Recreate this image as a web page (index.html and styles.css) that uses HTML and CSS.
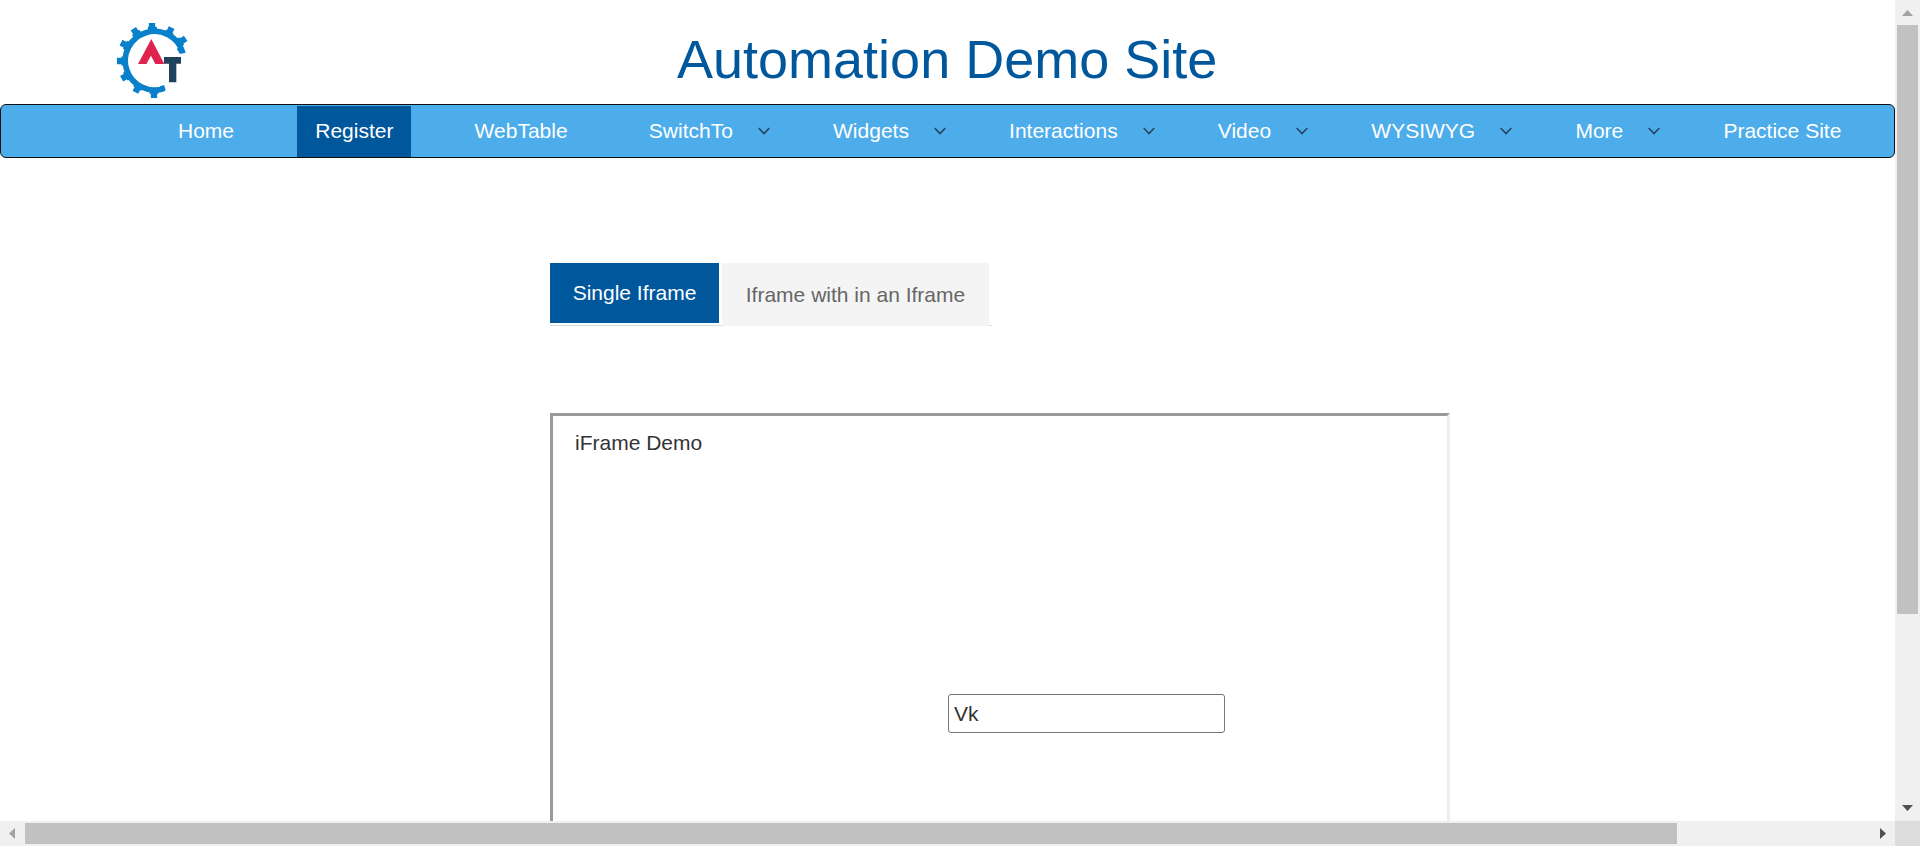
FILE: index.html
```html
<!DOCTYPE html>
<html lang="en">
<head>
<meta charset="utf-8">
<title>Frames</title>
<link rel="stylesheet" href="styles.css">
</head>
<body>
<div class="window">
  <div class="page">
    <header class="header">
      <svg class="logo" viewBox="0 0 330 285" aria-hidden="true">
        <g fill="none" stroke="#0880ca">
          <path stroke-width="17" d="M248 127A88 88 0 1 0 193 235"/>
          <path stroke-width="19" d="M156 39V66M100 56L116 80M63 98L88 111M51 153H80M65 206L90 192M106 247L120 221M162 264V238M215 53L203 77M257 85L233 101"/>
          <path stroke-width="27" d="M157 50V66M107 67L116 80M75 104L88 111M64 153H80M76 200L90 192M112 236L120 221M162 251V238M209 65L203 77M245 93L233 101"/>
        </g>
        <path d="M247 108L257 128L240 132L230 116Z" fill="#0880ca"/>
        <path d="M180 229L192 225L197 240L180 245Z" fill="#0880ca"/>
        <path d="M154 87L193 162H166L153 137L139 162H114Z" fill="#e0234e"/>
        <path d="M192 141H243V161H229V217H207V161H192Z" fill="#21425c"/>
      </svg>
      <h1 class="title">Automation Demo Site</h1>
    </header>
    <nav class="nav">
      <a class="link">Home</a>
      <a class="link active">Register</a>
      <a class="link">WebTable</a>
      <a class="link menu">SwitchTo<svg class="caret" viewBox="0 0 12 8"><path d="M.7 1L6 6.6 11.3 1"/></svg></a>
      <a class="link menu">Widgets<svg class="caret" viewBox="0 0 12 8"><path d="M.7 1L6 6.6 11.3 1"/></svg></a>
      <a class="link menu">Interactions<svg class="caret" viewBox="0 0 12 8"><path d="M.7 1L6 6.6 11.3 1"/></svg></a>
      <a class="link menu">Video<svg class="caret" viewBox="0 0 12 8"><path d="M.7 1L6 6.6 11.3 1"/></svg></a>
      <a class="link menu">WYSIWYG<svg class="caret" viewBox="0 0 12 8"><path d="M.7 1L6 6.6 11.3 1"/></svg></a>
      <a class="link menu">More<svg class="caret" viewBox="0 0 12 8"><path d="M.7 1L6 6.6 11.3 1"/></svg></a>
      <a class="link">Practice Site</a>
    </nav>
    <main class="content">
      <div class="tabs">
        <a class="tab selected">Single Iframe</a>
        <a class="tab">Iframe with in an Iframe</a>
      </div>
      <section class="frame">
        <h5 class="frame-title">iFrame Demo</h5>
        <input class="field" type="text" value="Vk">
      </section>
    </main>
  </div>
  <div class="bar vertical">
    <svg class="arrow-v" viewBox="0 0 25 25"><path d="M7 16L12.500 10L18 16Z" fill="#a3a3a3"/></svg>
    <div class="thumb"></div>
    <svg class="arrow-v last" viewBox="0 0 25 25"><path d="M7 9H18L12.500 15Z" fill="#505050"/></svg>
  </div>
  <div class="bar horizontal">
    <svg class="arrow-h" viewBox="0 0 25 25"><path d="M15 7L9 12.500L15 18Z" fill="#a3a3a3"/></svg>
    <div class="thumb"></div>
    <svg class="arrow-h last" viewBox="0 0 25 25"><path d="M10 7L16 12.500L10 18Z" fill="#505050"/></svg>
  </div>
  <div class="corner"></div>
</div>
</body>
</html>
```
FILE: styles.css
```css
* { box-sizing: border-box; }
body {
  margin: 0;
  overflow: hidden;
  background: #fff;
  color: #333;
  font: 21px/30px "Liberation Sans", Arial, sans-serif;
}
.window {
  display: grid;
  grid-template: 821px 25px / 1895px 25px;
}
.page { display: flex; flex-direction: column; overflow: hidden; }
.header {
  display: flex;
  height: 104px;
  padding: 10px 0 0 100px;
}
.logo { width: 110px; height: 95px; flex: none; }
.title {
  margin: 19px 0 0 467px;
  color: #00579c;
  font-size: 54px;
  font-weight: 400;
  line-height: 60px;
  white-space: nowrap;
}
.nav {
  display: flex;
  flex: none;
  gap: 45.2px;
  height: 54px;
  padding: 1px 0 0 159px;
  border: 1px solid #111;
  border-radius: 6px;
  background: #4dadeb;
}
.link {
  display: flex;
  align-items: center;
  padding: 0 18px 2px;
  color: #fff;
  white-space: nowrap;
}
.link.active { background: #00579c; }
.link.menu { padding-right: 0; }
.caret {
  width: 12px;
  height: 8px;
  margin-left: 25px;
  fill: none;
  stroke: #26425a;
  stroke-width: 1.5;
}
.content {
  display: flex;
  flex: 1;
  flex-direction: column;
  align-items: flex-start;
  padding: 105px 0 0 550px;
}
.tabs {
  display: flex;
  align-items: flex-start;
  gap: 3px;
  width: 442px;
  height: 63px;
  border-bottom: 1px solid #ddd;
}
.tab {
  flex: none;
  width: 267px;
  height: 63px;
  background: #f4f4f4;
  color: #666;
  line-height: 64px;
  text-align: center;
  white-space: nowrap;
}
.tab.selected {
  width: 169px;
  height: 60px;
  background: #00579c;
  color: #fff;
  line-height: 60px;
}
.frame {
  flex: none;
  width: 900px;
  height: 440px;
  margin-top: 87px;
  padding: 12px 23px 12px 22px;
  border: 3px solid;
  border-color: #9a9a9a #eee #eee #9a9a9a;
}
.frame-title { margin: 0; font-size: 21px; font-weight: 400; line-height: 30px; }
.field {
  display: block;
  width: 277px;
  height: 39px;
  margin: 236px 0 0 373px;
  padding: 0 5px;
  border: 1px solid #767676;
  border-radius: 3px;
  color: #333;
  font: 21px "Liberation Sans", Arial, sans-serif;
}
.bar { display: flex; background: #f0f0f0; }
.vertical { flex-direction: column; align-items: center; }
.horizontal { align-items: center; }
.thumb { background: #c1c1c1; }
.vertical .thumb { width: 21px; height: 589px; }
.horizontal .thumb { width: 1652px; height: 21px; }
.arrow-v, .arrow-h { width: 25px; height: 25px; flex: none; }
.vertical .last { margin-top: auto; }
.horizontal .last { margin-left: auto; }
.corner { background: #dcdcdc; }
```
